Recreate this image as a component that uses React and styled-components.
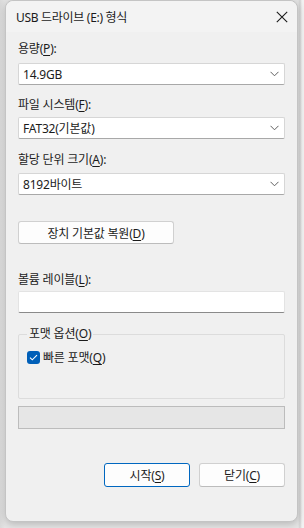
import React from "react";
import styled, { createGlobalStyle } from "styled-components";

const GlobalStyle = createGlobalStyle`
  html, body {
    margin: 0;
    padding: 0;
    background: #e9e9e9;
    font-family: "Noto Sans", "Noto Sans CJK KR", sans-serif;
  }
`;

const Desk = styled.div`
  width: 304px;
  height: 528px;
  overflow: hidden;
  display: flex;
  padding-left: 5px;
  box-sizing: border-box;
  background: linear-gradient(90deg, #dadada 0, #e6e6e6 5px, #e6e6e6 298px, #d4d4d4 300px, #f2f2f2 302px);
`;

const Dialog = styled.div`
  width: 293px;
  height: 522px;
  box-sizing: border-box;
  background: #f0f0f0;
  border: 1px solid #c4c4c4;
  border-radius: 8px;
  box-shadow: 0 2px 8px rgba(0, 0, 0, 0.22);
  display: flex;
  flex-direction: column;
  font-size: 12px;
  color: #1b1b1b;
`;

const TitleBar = styled.div`
  height: 31px;
  flex: none;
  display: flex;
  align-items: center;
  justify-content: space-between;
  padding: 0 9px 0 10px;
  background: #f3f3f3;
  border-radius: 8px 8px 0 0;
  font-size: 12px;
  letter-spacing: -0.3px;
`;

const Close = styled.svg`
  width: 12px;
  height: 12px;
`;

const Body = styled.div`
  display: flex;
  flex-direction: column;
  padding: 0 12px 0 12px;
`;

const Label = styled.div`
  height: 16px;
  line-height: 16px;
  margin-top: ${(p) => p.$top}px;
  letter-spacing: -0.2px;
`;

const Key = styled.span`
  text-decoration: underline;
  text-underline-offset: 2px;
`;

const Combo = styled.div`
  margin-top: ${(p) => p.$top}px;
  height: 22px;
  box-sizing: border-box;
  background: #ffffff;
  border: 1px solid #d6d6d6;
  border-bottom-color: #a8a8a8;
  border-radius: 2px;
  display: flex;
  align-items: center;
  justify-content: space-between;
  padding: 0 5px 0 4px;
  letter-spacing: -0.2px;
`;

const Chevron = styled.svg`
  width: 9px;
  height: 6px;
`;

const Button = styled.button`
  height: ${(p) => p.$h || 24}px;
  width: ${(p) => p.$w}px;
  margin-top: ${(p) => p.$top || 0}px;
  box-sizing: border-box;
  background: #fdfdfd;
  border: 1px solid ${(p) => (p.$primary ? "#0067c0" : "#d0d0d0")};
  border-bottom-color: ${(p) => (p.$primary ? "#0067c0" : "#bcbcbc")};
  border-radius: 3px;
  font-family: inherit;
  font-size: 12px;
  color: #1b1b1b;
  padding: 0;
  letter-spacing: -0.2px;
`;

const TextBox = styled.div`
  margin-top: ${(p) => p.$top}px;
  height: 22px;
  box-sizing: border-box;
  background: #ffffff;
  border: 1px solid #e3e3e3;
  border-bottom: 1px solid #8a8a8a;
  border-radius: 2px;
`;

const Group = styled.fieldset`
  margin: 14px 0 0 0;
  height: 72px;
  box-sizing: border-box;
  border: 1px solid #dcdcdc;
  border-radius: 2px;
  padding: 0 8px;
  min-width: 0;
`;

const Legend = styled.legend`
  padding: 0 2px;
  margin-left: 0;
  line-height: 14px;
  letter-spacing: -0.2px;
`;

const CheckRow = styled.label`
  display: flex;
  align-items: center;
  gap: 3px;
  margin-top: 7px;
  letter-spacing: -0.2px;
`;

const Box = styled.span`
  width: 13px;
  height: 13px;
  border-radius: 3px;
  background: #005fb8;
  display: flex;
  align-items: center;
  justify-content: center;
`;

const Progress = styled.div`
  margin-top: 7px;
  height: 23px;
  box-sizing: border-box;
  background: #e6e6e6;
  border: 1px solid #bcbcbc;
`;

const Footer = styled.div`
  display: flex;
  justify-content: flex-end;
  gap: 9px;
  margin-top: 34px;
`;

function Field({ label, k, value, top, comboTop }) {
  return (
    <>
      <Label $top={top}>
        {label}(<Key>{k}</Key>):
      </Label>
      <Combo $top={comboTop}>
        <span>{value}</span>
        <Chevron viewBox="0 0 9 6">
          <path d="M0.5 0.8 L4.5 4.8 L8.5 0.8" fill="none" stroke="#5f5f5f" strokeWidth="1" />
        </Chevron>
      </Combo>
    </>
  );
}

function App() {
  return (
    <Desk>
      <GlobalStyle />
      <Dialog>
        <TitleBar>
          <span>USB 드라이브 (E:) 형식</span>
          <Close viewBox="0 0 12 12">
            <path d="M0.8 0.8 L11.2 11.2 M11.2 0.8 L0.8 11.2" stroke="#1b1b1b" strokeWidth="1.1" />
          </Close>
        </TitleBar>
        <Body>
          <Field label="용량" k="P" value="14.9GB" top={9} comboTop={6} />
          <Field label="파일 시스템" k="F" value="FAT32(기본값)" top={12} comboTop={4} />
          <Field label="할당 단위 크기" k="A" value="8192바이트" top={13} comboTop={5} />
          <Button $w={156} $h={23} $top={26}>
            장치 기본값 복원(<Key>D</Key>)
          </Button>
          <Label $top={28}>
            볼륨 레이블(<Key>L</Key>):
          </Label>
          <TextBox $top={3} />
          <Group>
            <Legend>
              포맷 옵션(<Key>O</Key>)
            </Legend>
            <CheckRow>
              <Box>
                <svg width="9" height="7" viewBox="0 0 9 7">
                  <path d="M1 3.6 L3.3 5.8 L8 1.2" fill="none" stroke="#ffffff" strokeWidth="1.1" />
                </svg>
              </Box>
              <span>
                빠른 포맷(<Key>Q</Key>)
              </span>
            </CheckRow>
          </Group>
          <Progress />
          <Footer>
            <Button $w={86} $primary>
              시작(<Key>S</Key>)
            </Button>
            <Button $w={86}>
              닫기(<Key>C</Key>)
            </Button>
          </Footer>
        </Body>
      </Dialog>
    </Desk>
  );
}

export default App;
